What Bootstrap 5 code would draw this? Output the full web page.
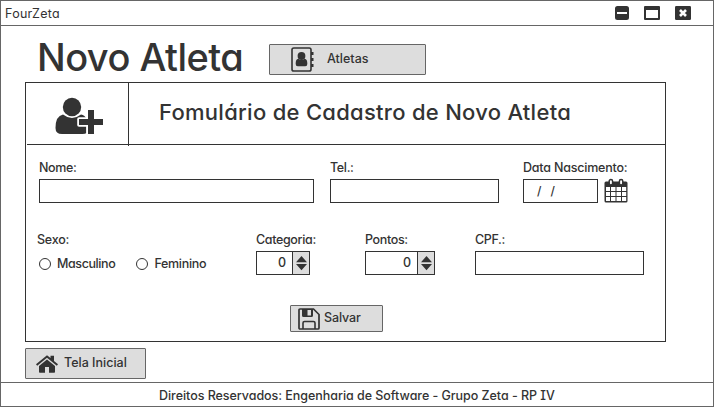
<!DOCTYPE html>
<html lang="pt-BR">
<head>
<meta charset="utf-8">
<meta name="viewport" content="width=device-width, initial-scale=1">
<title>FourZeta</title>
<link href="https://cdn.jsdelivr.net/npm/bootstrap@5.3.0/dist/css/bootstrap.min.css" rel="stylesheet">
<style>
  :root { --ink: #333; --edge: #666; --face: #ddd; }
  body { font-family: Inter, "Noto Sans", sans-serif; font-size: 12.5px; font-weight: 500; line-height: 16px; color: #333;
         font-feature-settings: "cv11", "cv08"; letter-spacing: -.05px; overflow: hidden; }
  svg { display: block; flex: none; fill: var(--ink); }
  .window { width: 714px; height: 407px; border: 1px solid var(--edge); background: #fff; }
  .titlebar { height: 25px; border-bottom: 1px solid var(--edge); padding: 0 22px 0 4px; }
  .app-name { letter-spacing: .25px; font-weight: 400; padding-top: 1px; }
  .gap-close { margin-left: 15px; }
  .heading-row { height: 56px; padding-left: 36px; }
  .page-title { width: 232px; margin: 0; font-size: 38px; line-height: 62px; font-weight: 500; color: var(--ink); letter-spacing: -.55px; }
  .btn-mock { --bs-btn-padding-x: 0; --bs-btn-padding-y: 0; --bs-btn-font-size: 12.5px; --bs-btn-line-height: 16px; --bs-btn-font-weight: 500;
              --bs-btn-bg: var(--face); --bs-btn-border-color: var(--edge); --bs-btn-color: #333; --bs-btn-border-radius: 1px;
              --bs-btn-hover-bg: #d0d0d0; --bs-btn-hover-border-color: var(--edge); }
  .btn-mock span { padding-bottom: 2px; }
  .btn-list { width: 157px; height: 31px; margin-top: 18px; padding-left: 21px; gap: 13px; }
  .btn-home { width: 121px; height: 31px; margin: 6px 0 0 24px; padding-left: 10px; gap: 6px; letter-spacing: 0; }
  .btn-save { width: 93px; height: 27px; margin: 29px 0 0 264px; padding-left: 7px; gap: 4px; letter-spacing: -.1px; }
  .panel { width: 641px; height: 260px; margin-left: 24px; border: 1px solid var(--ink); }
  .panel-head { height: 62px; margin-left: 1px; border-bottom: 1px solid var(--ink); }
  .panel-icon { width: 102px; height: 63px; border-right: 1px solid var(--ink); padding: 14px 0 0 28px; }
  .panel-title { margin: 0; font-size: 22px; line-height: 58px; padding-left: 30px; font-weight: 450; color: var(--ink); letter-spacing: .28px; }
  .row-person { margin: 14px 0 0 13px; }
  .row-sport { margin: 28px 0 0 11px; }
  .caption { display: block; height: 20px; line-height: 17px; white-space: nowrap; letter-spacing: -.35px; }
  .caption-date { letter-spacing: -.2px; }
  .caption-sex { letter-spacing: -.2px; }
  .box, .box:focus { height: 24px; min-height: 0; padding: 0; border: 1px solid var(--ink); border-radius: 0; font-size: 12.5px; line-height: 22px; color: #333; }
  .w-name { width: 275px; }
  .w-phone { width: 169px; }
  .w-date { width: 75px; }
  .w-date .box { padding-left: 13px; word-spacing: 6px; font-size: 12px; }
  .calendar { margin-left: 6px; }
  .w-sex { width: 219px; }
  .w-cat { width: 54px; }
  .w-pts { width: 70px; margin-left: 55px; }
  .w-cpf { margin-left: 40px; }
  .choice { gap: 6px; height: 25px; margin-left: 2px; letter-spacing: -.3px; }
  .choice + .choice { margin-left: 21px; }
  .choice-long { letter-spacing: -.4px; }
  .choice input { width: 12px; height: 12px; margin: 0; border: 1px solid var(--ink); }
  .spin-value { text-align: right; padding-right: 6px; line-height: 21px; }
  .spin-arrows { width: 17px; border-left: 1px solid var(--ink); background: var(--face); padding: 4px 0 0 3px; }
  .footer-bar { height: 25px; border-top: 1px solid var(--edge); margin-top: 3px; padding: 5px 0 0 158px; white-space: nowrap; letter-spacing: -.04px; }
</style>
<script src="https://cdn.jsdelivr.net/npm/bootstrap@5.3.0/dist/js/bootstrap.bundle.min.js"></script>
</head>
<body>
<div class="window d-flex flex-column">
  <header class="titlebar d-flex align-items-center justify-content-between flex-shrink-0">
    <span class="app-name">FourZeta</span>
    <div class="d-flex align-items-center">
      <svg width="14" height="14" viewBox="0 0 14 14"><path fill-rule="evenodd" d="M2.500 0h9A2.500 2.500 0 0 1 14 2.500v9a2.500 2.500 0 0 1-2.500 2.500h-9A2.500 2.500 0 0 1 0 11.500v-9A2.500 2.500 0 0 1 2.500 0zM2 6v2h10V6z"/></svg>
      <svg width="16" height="14" viewBox="0 0 16 14" class="gap-close"><path fill-rule="evenodd" d="M1 0h14a1 1 0 0 1 1 1v12a1 1 0 0 1-1 1H1a1 1 0 0 1-1-1V1a1 1 0 0 1 1-1zM2 4v8h12V4z"/></svg>
      <svg width="16" height="14" viewBox="0 0 16 14" class="gap-close"><rect width="16" height="14" rx="1.200"/><path d="M5 4l6 6M11 4l-6 6" stroke="#fff" stroke-width="2.600"/></svg>
    </div>
  </header>

  <div class="heading-row d-flex flex-shrink-0">
    <h1 class="page-title text-nowrap">Novo Atleta</h1>
    <button type="button" class="btn btn-mock btn-list d-flex align-items-center">
      <svg width="23" height="25" viewBox="0 0 23 25"><rect x="1" y="1" width="19" height="23" rx="1.800" fill="none" stroke="#333" stroke-width="1.600"/><path d="M20 5h2.500v3H20zM20 11h2.500v3H20zM20 17h2.500v3H20z"/><circle cx="10.500" cy="9" r="3.900"/><path d="M7.300 11.800q3.200 2.600 6.400 0 2.600.4 2.600 4.500v.7q0 2.300-2 2.300H6.700q-2 0-2-2.300v-.7q0-4.100 2.600-4.500z"/></svg>
      <span>Atletas</span>
    </button>
  </div>

  <main class="panel flex-shrink-0">
    <div class="panel-head d-flex">
      <div class="panel-icon flex-shrink-0">
        <svg width="49" height="38" viewBox="0 0 49 38"><circle cx="17" cy="10" r="9.200"/><path d="M8 17.500q9 7 18 0 4 .8 5.500 4.500V36q-1 1-4 1H7Q.5 37 .5 31 .5 19 8 17.500z"/><path d="M33 13h6v9h9v6h-9v9h-6v-9h-9v-6h9z" stroke="#fff" stroke-width="3.600" stroke-linejoin="round" paint-order="stroke"/></svg>
      </div>
      <h2 class="panel-title text-nowrap">Fomulário de Cadastro de Novo Atleta</h2>
    </div>

    <form>
      <div class="row-person d-flex">
        <div class="w-name">
          <label class="caption" for="nome">Nome:</label>
          <input id="nome" type="text" class="form-control box">
        </div>
        <div class="w-phone ms-3">
          <label class="caption" for="tel">Tel.:</label>
          <input id="tel" type="text" class="form-control box">
        </div>
        <div class="w-date ms-4">
          <span class="caption caption-date">Data Nascimento:</span>
          <div class="box">/ /</div>
        </div>
        <svg class="calendar align-self-end" width="24" height="25" viewBox="0 0 24 25"><path fill-rule="evenodd" d="M2 3.500h20q1.500 0 1.500 1.500v18q0 1.500-1.500 1.500H2Q.5 24.500.5 23V5Q.5 3.500 2 3.500zM2 9v4h4V9zM7 9v4h4.500V9zM12.500 9v4h4.500V9zM18 9v4h4.200V9zM2 14v4h4v-4zM7 14v4h4.500v-4zM12.500 14v4h4.500v-4zM18 14v4h4.200v-4zM2 19v4h4v-4zM7 19v4h4.500v-4zM12.500 19v4h4.500v-4zM18 19v4h4.200v-4z"/><g fill="#fff" stroke="#333" stroke-width="1.500"><rect x="5.200" y="1.500" width="3.400" height="5.500" rx="1.700"/><rect x="15.400" y="1.500" width="3.400" height="5.500" rx="1.700"/></g></svg>
      </div>

      <div class="row-sport d-flex">
        <div class="w-sex">
          <span class="caption caption-sex">Sexo:</span>
          <div class="d-flex">
            <label class="choice choice-long d-flex align-items-center"><input type="radio" name="sexo" class="form-check-input"><span>Masculino</span></label>
            <label class="choice d-flex align-items-center"><input type="radio" name="sexo" class="form-check-input"><span>Feminino</span></label>
          </div>
        </div>
        <div class="w-cat">
          <span class="caption">Categoria:</span>
          <div class="box d-flex"><span class="spin-value flex-fill">0</span>
            <span class="spin-arrows"><svg width="11" height="15" viewBox="0 0 11 15"><path d="M5.500 0 11 6.300H0zM5.500 14.300 11 8H0z"/></svg></span></div>
        </div>
        <div class="w-pts">
          <span class="caption">Pontos:</span>
          <div class="box d-flex"><span class="spin-value flex-fill">0</span>
            <span class="spin-arrows"><svg width="11" height="15" viewBox="0 0 11 15"><path d="M5.500 0 11 6.300H0zM5.500 14.300 11 8H0z"/></svg></span></div>
        </div>
        <div class="w-phone w-cpf">
          <label class="caption" for="cpf">CPF.:</label>
          <input id="cpf" type="text" class="form-control box">
        </div>
      </div>

      <button type="button" class="btn btn-mock btn-save d-flex align-items-center">
        <svg width="22" height="22" viewBox="0 0 22 22"><path d="M2 1h13.500L21 6.500V20q0 1-1 1H2q-1 0-1-1V2q0-1 1-1z" fill="none" stroke="#333" stroke-width="1.700"/><path fill-rule="evenodd" d="M4 1h11v6.500q0 1.500-1.500 1.500h-8Q4 9 4 7.500zM9.500 2v5.500H13V2z"/><path d="M5 21v-6q0-1.500 1.500-1.500h9q1.500 0 1.500 1.500v6" fill="none" stroke="#333" stroke-width="1.600"/></svg>
        <span>Salvar</span>
      </button>
    </form>
  </main>

  <button type="button" class="btn btn-mock btn-home d-flex align-items-center flex-shrink-0">
    <svg width="22" height="18" viewBox="0 0 22 18"><path d="M11 4.500l8 6.500v6q0 .8-.8.800H13V12H9v5.800H3.800Q3 17.800 3 17v-6z"/><path d="M11 .2l3.500 2.900V.8H18v5.200l4 3.300-1.200 1.500L11 2.800 1.200 10.800 0 9.300z"/></svg>
    <span>Tela Inicial</span>
  </button>

  <footer class="footer-bar flex-shrink-0">Direitos Reservados: Engenharia de Software - Grupo Zeta - RP IV</footer>
</div>
</body>
</html>
